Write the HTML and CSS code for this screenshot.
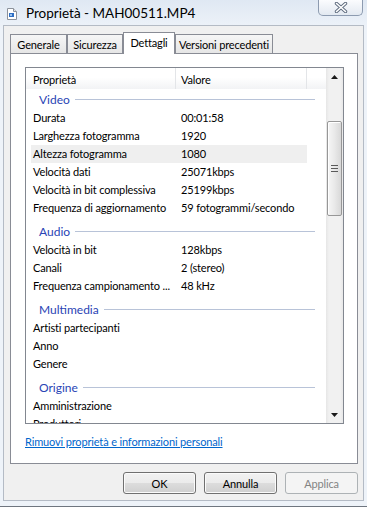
FILE: index.html
```html
<!DOCTYPE html>
<html lang="it">
  <head>
    <meta charset="UTF-8">
    <title>Proprietà - MAH00511.MP4</title>
    <link rel="stylesheet" href="styles.css">
  </head>
  <body>
    <div class="window">
      <div class="titlebar">
        <svg class="app-icon" width="11" height="12" viewBox="0 0 11 12">
          <path d="M1.5 .5h6l3 3v8h-9z" fill="#fff" stroke="#8c929c"/>
          <path d="M7.5 .5v3h3" fill="#e6e6e6" stroke="#8c929c"/>
          <rect x="3" y="5" width="5" height="4" fill="#2f6fc4"/>
          <rect x="4" y="6" width="2" height="2" fill="#9cc3ee"/>
        </svg>
        <span class="title">Proprietà - MAH00511.MP4</span>
        <div class="close-btn">
          <svg width="14" height="11" viewBox="0 0 14 11">
            <path d="M2.5 1.5l9 8M11.5 1.5l-9 8" stroke="#5e6b7e" stroke-width="3.4" stroke-linecap="round"/>
            <path d="M2.5 1.5l9 8M11.5 1.5l-9 8" stroke="#fff" stroke-width="1.6" stroke-linecap="round"/>
          </svg>
        </div>
      </div>

      <div class="client">
        <div class="tabs">
          <div class="tab tab-generale">Generale</div>
          <div class="tab tab-sicurezza">Sicurezza</div>
          <div class="tab tab-dettagli active">Dettagli</div>
          <div class="tab tab-versioni">Versioni precedenti</div>
        </div>

        <div class="panel">
          <div class="listview">
            <div class="list-main">
              <div class="list-header">
                <div class="hcol hcol-name">Proprietà</div>
                <div class="hcol hcol-value">Valore</div>
                <div class="hcol hcol-rest"></div>
              </div>
              <div class="list-body">
                <div class="group first"><span>Video</span></div>
                <div class="row"><span class="name">Durata</span><span class="value">00:01:58</span></div>
                <div class="row"><span class="name">Larghezza fotogramma</span><span class="value">1920</span></div>
                <div class="row hot"><span class="name">Altezza fotogramma</span><span class="value">1080</span></div>
                <div class="row"><span class="name">Velocità dati</span><span class="value">25071kbps</span></div>
                <div class="row"><span class="name">Velocità in bit complessiva</span><span class="value">25199kbps</span></div>
                <div class="row"><span class="name">Frequenza di aggiornamento</span><span class="value">59 fotogrammi/secondo</span></div>

                <div class="group"><span>Audio</span></div>
                <div class="row"><span class="name">Velocità in bit</span><span class="value">128kbps</span></div>
                <div class="row"><span class="name">Canali</span><span class="value">2 (stereo)</span></div>
                <div class="row"><span class="name">Frequenza campionamento ...</span><span class="value">48 kHz</span></div>

                <div class="group"><span>Multimedia</span></div>
                <div class="row"><span class="name">Artisti partecipanti</span><span class="value"></span></div>
                <div class="row"><span class="name">Anno</span><span class="value"></span></div>
                <div class="row"><span class="name">Genere</span><span class="value"></span></div>

                <div class="group"><span>Origine</span></div>
                <div class="row"><span class="name">Amministrazione</span><span class="value"></span></div>
                <div class="row"><span class="name">Produttori</span><span class="value"></span></div>
              </div>
            </div>

            <div class="scrollbar">
              <div class="sb-arrow">
                <svg width="7" height="4" viewBox="0 0 7 4"><path d="M3.5 0L7 4H0z" fill="#1a1a1a"/></svg>
              </div>
              <div class="sb-track">
                <div class="thumb">
                  <svg width="7" height="7" viewBox="0 0 7 7">
                    <path d="M0 .5h7M0 3.5h7M0 6.5h7" stroke="#5a5a5a"/>
                  </svg>
                </div>
              </div>
              <div class="sb-arrow">
                <svg width="7" height="4" viewBox="0 0 7 4"><path d="M0 0h7L3.5 4z" fill="#1a1a1a"/></svg>
              </div>
            </div>
          </div>

          <a class="remove-link" href="#">Rimuovi proprietà e informazioni personali</a>
        </div>

        <div class="buttons">
          <button type="button" class="btn">OK</button>
          <button type="button" class="btn">Annulla</button>
          <button type="button" class="btn" disabled>Applica</button>
        </div>
      </div>
    </div>
  </body>
</html>
```

FILE: styles.css
```css
* { box-sizing: border-box; }
body { margin: 0; background: #fff; font-family: Lato, "Liberation Sans", sans-serif; font-size: 11px; letter-spacing: -0.15px; color: #000; }

.window { width: 367px; height: 507px; padding-bottom: 5px; border-bottom: 1px solid #6f7680; background: linear-gradient(#dfe8f3, #eef3f9 30px, #eef3f9); }

/* title bar */
.titlebar { height: 25px; display: flex; align-items: flex-start; padding-left: 6px; }
.app-icon { margin-top: 8px; flex: none; }
.title { margin: 5px 0 0 9px; font-size: 13.5px; line-height: 17px; letter-spacing: 0; }
.close-btn { margin-left: auto; margin-right: 4px; width: 45px; height: 16px; border: 1px solid #8d9bb0; border-top: none; border-radius: 0 0 5px 5px; background: linear-gradient(#fbfcfe, #e3e9f1); display: flex; align-items: center; justify-content: center; }

/* dialog body */
.client { margin: 0 3px; height: 476px; border: 1px solid #b4bbc5; background: #f0f0f0; }

.tabs { display: flex; align-items: flex-end; height: 21px; margin: 6px 0 0 6px; }
.tab { height: 19px; border: 1px solid #898c95; border-bottom: none; background: linear-gradient(#f6f6f6, #e6e6e6); display: flex; align-items: center; justify-content: center; white-space: nowrap; padding-top: 1px; }
.tab-generale { width: 57px; }
.tab-sicurezza { width: 56px; }
.tab-dettagli { width: 52px; }
.tab-versioni { width: 98px; }
.tab.active { height: 22px; margin-bottom: -1px; background: #fff; position: relative; z-index: 1; padding: 0 0 3px; }

.panel { margin-left: 6px; width: 348px; height: 411px; border: 1px solid #898c95; background: #fff; padding: 13px 0 0 14px; }

.listview { width: 319px; height: 357px; border: 1px solid #828790; display: flex; }
.list-main { flex: 1; overflow: hidden; }

.list-header { height: 21px; display: flex; background: linear-gradient(#fff 45%, #f2f3f5); }
.hcol { padding-top: 4px; line-height: 15px; border-right: 1px solid #e3e5e8; }
.hcol-name { width: 150px; padding-left: 7px; }
.hcol-value { width: 131px; padding-left: 5px; }
.hcol-rest { flex: 1; border-right: none; }

.group { display: flex; align-items: center; height: 19px; margin: 5px 11px 0 5px; padding-left: 8px; color: #2944b5; font-size: 12px; letter-spacing: 0; }
.group.first { margin-top: 1px; }
.group::after { content: ""; flex: 1; height: 1px; margin-left: 5px; background: #b8c3d8; }

.row { display: flex; height: 18px; line-height: 18px; margin: 0 19px 0 5px; white-space: nowrap; }
.row.hot { background: #efefef; }
.row .name { width: 144px; padding-left: 2px; overflow: hidden; text-overflow: ellipsis; flex: none; }
.row .value { padding-left: 6px; }

/* vertical scrollbar */
.scrollbar { width: 17px; display: flex; flex-direction: column; background: linear-gradient(to right, #e6e6e6, #f1f1f1 3px, #f1f1f1 14px, #e8e8e8); }
.sb-arrow { height: 17px; display: flex; align-items: center; justify-content: center; flex: none; }
.sb-track { flex: 1; padding: 36px 0 0 1px; }
.thumb { width: 15px; height: 95px; border: 1px solid #979797; border-radius: 2px; background: linear-gradient(to right, #f6f6f6, #e9e9e9 50%, #d8d8d8); box-shadow: inset 1px 1px 0 #fff; display: flex; align-items: center; justify-content: center; }

.remove-link { display: block; width: fit-content; margin-top: 10px; line-height: 15px; color: #0066cc; text-decoration: underline; }

.buttons { display: flex; justify-content: flex-end; gap: 8px; margin-top: 8px; padding-right: 5px; }
.btn { width: 73px; height: 22px; border: 1px solid #707070; border-radius: 3px; background: linear-gradient(#f2f2f2, #ebebeb 50%, #dddddd 50%, #cfcfcf); box-shadow: inset 0 0 0 1px #fbfbfb; font: inherit; letter-spacing: inherit; color: #000; padding: 0; }
.btn:disabled { border-color: #adb2b5; background: #f4f4f4; box-shadow: none; color: #838383; }
```
